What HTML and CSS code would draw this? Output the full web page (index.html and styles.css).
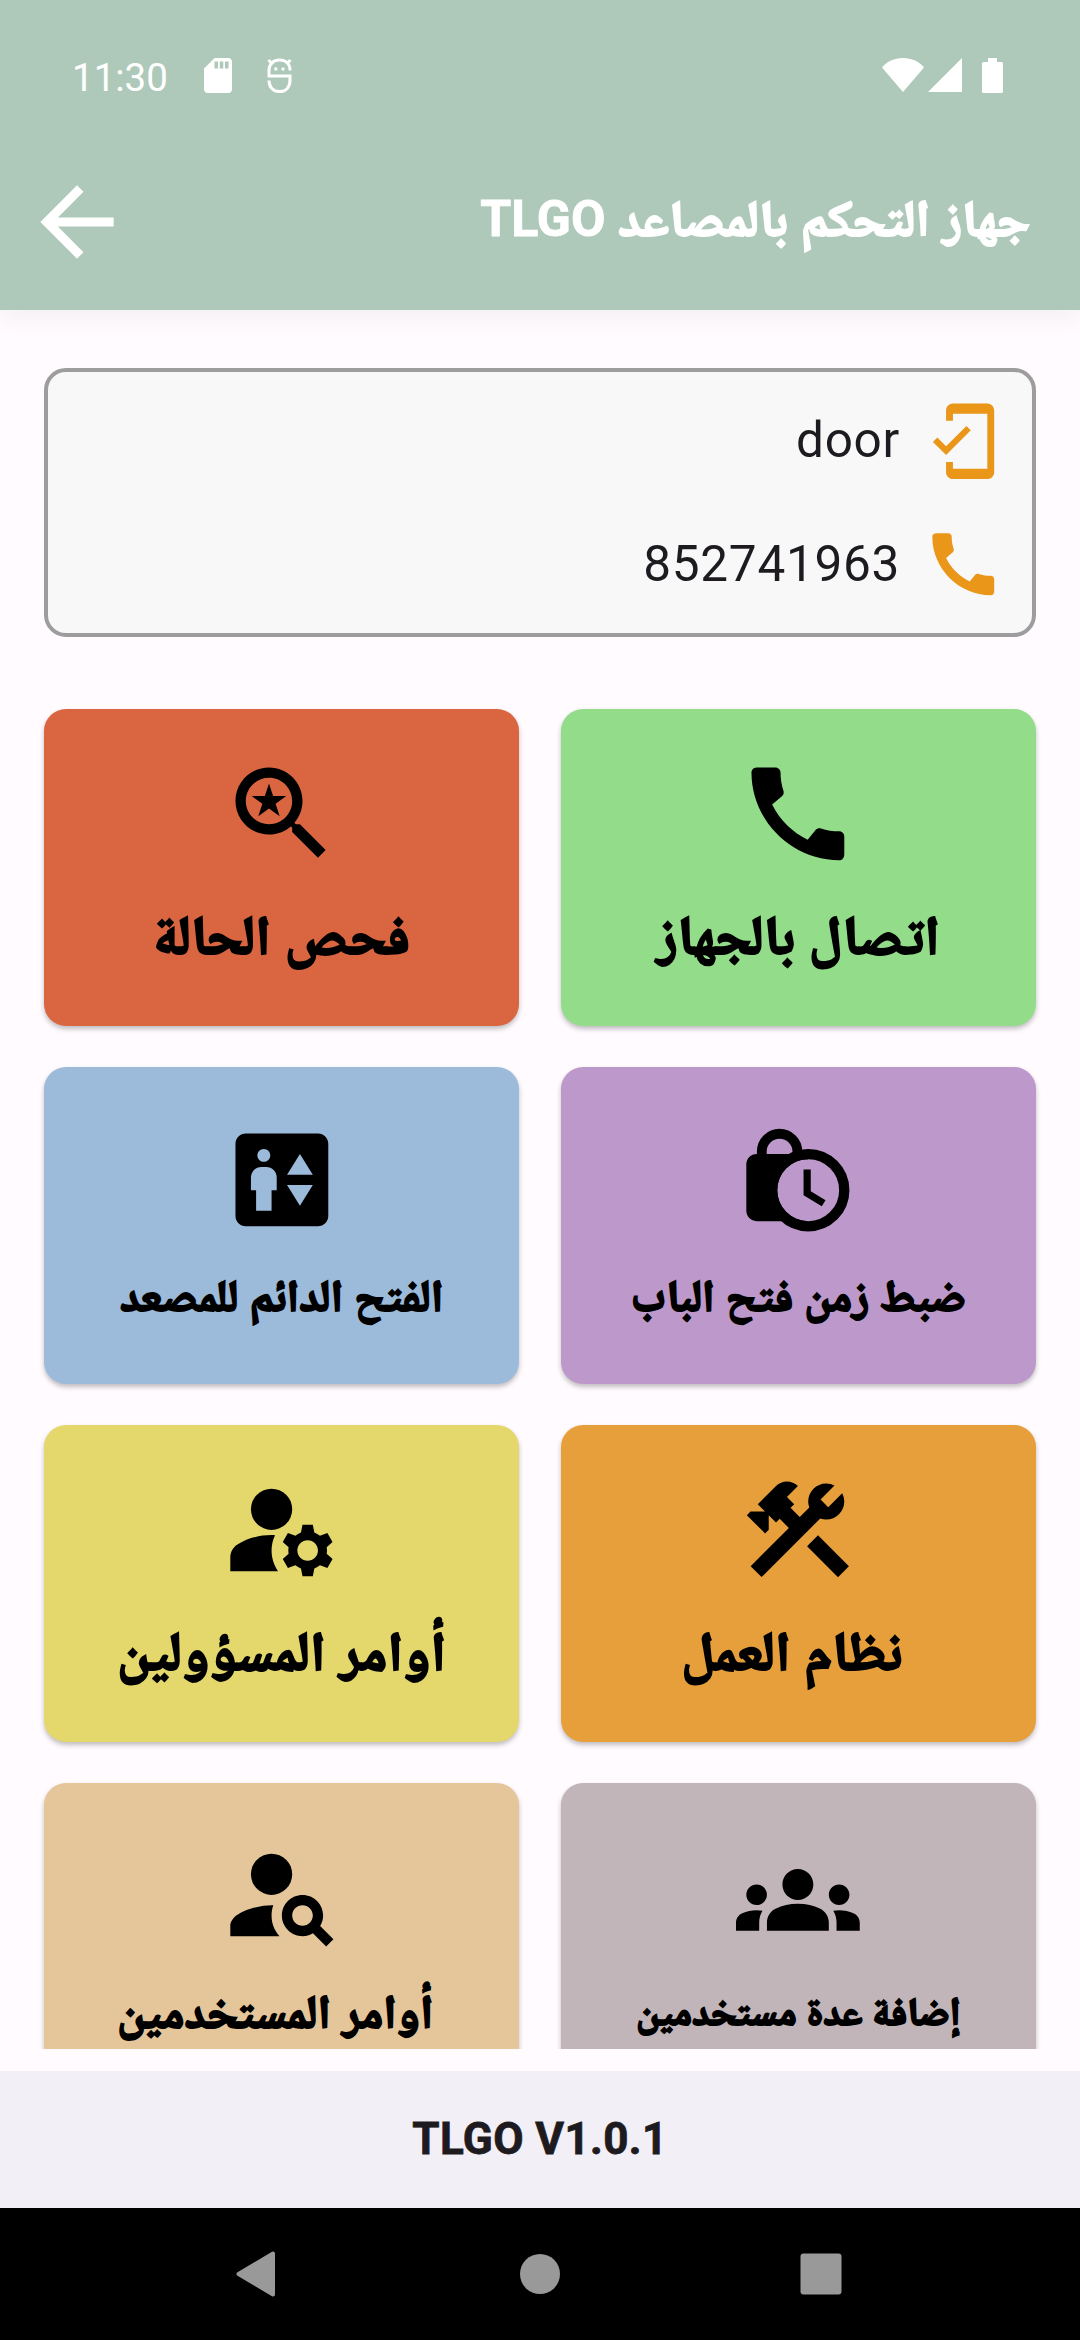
FILE: index.html
```html
<!DOCTYPE html>
<html lang="ar" dir="rtl">
<head>
  <meta charset="UTF-8">
  <title>جهاز التحكم بالمصاعد TLGO</title>
  <link rel="stylesheet" href="styles.css">
</head>
<body>
  <header class="header">
    <div class="status-bar" dir="ltr">
      <span class="time">11:30</span>
      <svg class="sd" viewBox="4 2 16 20"><path d="M18 2h-8L4 8v12c0 1.100.9 2 2 2h12c1.100 0 2-.9 2-2V4c0-1.100-.9-2-2-2zm-6 6h-2V4h2v4zm3 0h-2V4h2v4zm3 0h-2V4h2v4z"/></svg>
      <svg class="bug" viewBox="0 0 25 35">
        <g fill="none" stroke="#fff" stroke-width="3">
          <path d="M23 12.500C23 5.500 18.500 2 12.500 2S2 6 2 12.500V18h21v4c0 7-4 11.500-10.500 11.500S2 29 2 22.500"/>
          <path d="M1.500 2l4 4M23.500 2l-4 4"/>
        </g>
        <circle cx="8.800" cy="11" r="1.700"/><circle cx="16" cy="11" r="1.700"/>
      </svg>
      <span class="spacer"></span>
      <svg class="wifi" viewBox="0 0 42 34"><path d="M21 34L0 9.500C5 3.500 12 0 21 0s16 3.500 21 9.500z"/></svg>
      <svg class="signal" viewBox="0 0 34 34"><path d="M34 0v34H0z"/></svg>
      <svg class="battery" viewBox="0 0 21 35"><path d="M6 0h9v4h4.500Q21 4 21 5.500v28q0 1.500-1.500 1.500h-18Q0 35 0 33.500v-28Q0 4 1.500 4H6z"/></svg>
    </div>
    <div class="app-bar">
      <h1 class="title">جهاز التحكم بالمصاعد <span class="brand">TLGO</span></h1>
      <svg class="back" viewBox="0 0 24 24"><path d="M20 11H7.830l5.590-5.590L12 4l-8 8 8 8 1.410-1.410L7.830 13H20v-2z"/></svg>
    </div>
  </header>

  <main class="content">
    <section class="info">
      <div class="info-row">
        <svg viewBox="0 0 24 24"><path d="M19 1H9c-1.100 0-2 .9-2 2v3h2V4h10v16H9v-2H7v3c0 1.100.9 2 2 2h10c1.100 0 2-.9 2-2V3c0-1.100-.9-2-2-2zM7.010 13.470l-2.550-2.550-1.270 1.270L7 16l7.190-7.190-1.270-1.270z"/></svg>
        <span>door</span>
      </div>
      <div class="info-row">
        <svg viewBox="0 0 24 24"><path d="M20.010 15.380c-1.230 0-2.420-.2-3.530-.56-.35-.12-.74-.03-1.010.24l-1.570 1.970c-2.830-1.350-5.480-3.900-6.890-6.830l1.950-1.660c.27-.28.35-.67.24-1.020-.37-1.110-.56-2.300-.56-3.530 0-.54-.45-.99-.99-.99H4.190C3.650 3 3 3.240 3 3.990 3 13.280 10.730 21 20.010 21c.71 0 .99-.63.99-1.180v-3.450c0-.54-.45-.99-.99-.99z"/></svg>
        <span>852741963</span>
      </div>
    </section>

    <section class="grid">
      <div class="card green">
        <svg viewBox="0 0 24 24"><path d="M20.010 15.380c-1.230 0-2.420-.2-3.530-.56-.35-.12-.74-.03-1.010.24l-1.570 1.970c-2.830-1.350-5.480-3.900-6.890-6.830l1.950-1.660c.27-.28.35-.67.24-1.020-.37-1.110-.56-2.300-.56-3.530 0-.54-.45-.99-.99-.99H4.190C3.650 3 3 3.240 3 3.990 3 13.280 10.730 21 20.010 21c.71 0 .99-.63.99-1.180v-3.450c0-.54-.45-.99-.99-.99z"/></svg>
        <div class="label large">اتصال بالجهاز</div>
      </div>
      <div class="card red">
        <svg viewBox="0 0 24 24"><path d="M15.500 14h-.79l-.28-.27C15.410 12.590 16 11.110 16 9.500 16 5.910 13.090 3 9.500 3S3 5.910 3 9.500 5.910 16 9.500 16c1.610 0 3.090-.59 4.230-1.570l.27.28v.79l5 4.990L20.490 19l-4.990-5zm-6 0C7.010 14 5 11.990 5 9.500S7.010 5 9.500 5 14 7.010 14 9.500 11.990 14 9.500 14z"/><path d="M9.500 6.100l.8 2.450h2.550l-2.060 1.500.78 2.430L9.500 10.980l-2.070 1.500.78-2.430-2.060-1.500H8.700z"/></svg>
        <div class="label large">فحص الحالة</div>
      </div>
      <div class="card purple">
        <svg viewBox="0 0 24 24">
          <path d="M4 7h10v1a6 6 0 0 0 0 12H4c-1.100 0-2-.9-2-2V9c0-1.100.9-2 2-2z"/>
          <path d="M5 7.500v-1a3.450 3.450 0 0 1 6.900 0v1" fill="none" stroke="#000" stroke-width="1.900"/>
          <circle cx="14" cy="14" r="7" fill="none" stroke="#000" stroke-width="2"/>
          <path d="M14.500 10h-1.400v5l3.530 2.130.74-1.200-2.870-1.700z"/>
        </svg>
        <div class="label medium">ضبط زمن فتح الباب</div>
      </div>
      <div class="card blue">
        <svg viewBox="0 0 24 24"><path d="M19 3H5c-1.100 0-2 .9-2 2v14c0 1.100.9 2 2 2h14c1.100 0 2-.9 2-2V5c0-1.100-.9-2-2-2zM8.500 6c.69 0 1.250.56 1.250 1.250S9.190 8.500 8.500 8.500s-1.250-.56-1.250-1.250S7.810 6 8.500 6zM11 14h-1v4H7v-4H6v-2.500c0-1.100.9-2 2-2h1c1.100 0 2 .9 2 2V14zm4.500 3L13 13h5l-2.500 4zM13 11l2.500-4 2.500 4h-5z"/></svg>
        <div class="label medium">الفتح الدائم للمصعد</div>
      </div>
      <div class="card orange">
        <svg viewBox="0 0 24 24">
          <path d="M13.783 15.172l2.121-2.121 5.996 5.996-2.121 2.121zM17.500 10c1.930 0 3.500-1.570 3.500-3.500 0-.58-.16-1.120-.41-1.600l-2.700 2.700-1.490-1.490 2.700-2.700c-.48-.25-1.020-.41-1.600-.41C15.570 3 14 4.570 14 6.500c0 .41.080.8.210 1.160l-1.850 1.850-1.780-1.780.71-.71-1.410-1.410L12 3.490c-1.170-1.170-3.070-1.170-4.240 0L4.220 7.030l1.410 1.410H2.810l-.71.71 3.540 3.540.71-.71V9.150l1.410 1.410.71-.71 1.780 1.780-7.410 7.410 2.120 2.120L16.340 9.790c.36.13.75.21 1.160.21z"/>
        </svg>
        <div class="label large shifted">نظام العمل</div>
      </div>
      <div class="card yellow">
        <svg viewBox="0 0 24 24">
          <circle cx="10" cy="8" r="4"/>
          <path d="M10.670 13.020C10.450 13.010 10.230 13 10 13c-2.420 0-4.680.67-6.610 1.820C2.510 15.340 2 16.320 2 17.350V20h9.260C10.470 18.870 10 17.490 10 16c0-1.070.25-2.070.67-2.980zM20.750 16c0-.22-.03-.42-.06-.63l1.140-1.010-1-1.730-1.450.49c-.32-.27-.68-.48-1.080-.63L18 11h-2l-.3 1.490c-.4.150-.76.36-1.080.63l-1.450-.49-1 1.730 1.140 1.010c-.03.210-.06.410-.06.630s.03.420.06.630l-1.140 1.010 1 1.730 1.450-.49c.32.270.68.480 1.080.63L16 21h2l.3-1.490c.4-.15.760-.36 1.080-.63l1.450.49 1-1.730-1.140-1.010c.03-.21.060-.41.060-.63zM17 18c-1.100 0-2-.9-2-2s.9-2 2-2 2 .9 2 2-.9 2-2 2z"/>
        </svg>
        <div class="label large">أوامر المسؤولين</div>
      </div>
      <div class="card gray">
        <svg viewBox="0 0 24 24"><path d="M12 12.750c1.630 0 3.070.39 4.240.9 1.080.48 1.760 1.560 1.760 2.730V18H6v-1.610c0-1.180.68-2.260 1.760-2.730 1.170-.52 2.610-.91 4.240-.91zM4 13c1.100 0 2-.9 2-2s-.9-2-2-2-2 .9-2 2 .9 2 2 2zm1.130 1.100c-.37-.06-.74-.1-1.130-.1-.99 0-1.930.21-2.780.58C.48 14.900 0 15.620 0 16.430V18h4.500v-1.610c0-.83.23-1.610.63-2.290zM20 13c1.100 0 2-.9 2-2s-.9-2-2-2-2 .9-2 2 .9 2 2 2zm4 3.430c0-.81-.48-1.530-1.220-1.850-.85-.37-1.790-.58-2.780-.58-.39 0-.76.04-1.130.1.4.68.630 1.460.630 2.290V18H24v-1.570zM12 6c1.660 0 3 1.340 3 3s-1.340 3-3 3-3-1.340-3-3 1.340-3 3-3z"/></svg>
        <div class="label small">إضافة عدة مستخدمين</div>
      </div>
      <div class="card tan">
        <svg viewBox="0 0 24 24">
          <circle cx="10" cy="8" r="4"/>
          <path d="M10.350 14.010C7.620 13.910 2 15.270 2 18v2h9.540c-2.470-2.760-1.230-5.890-1.190-5.990zM19.430 18.020c.36-.59.57-1.280.57-2.020 0-2.210-1.790-4-4-4s-4 1.790-4 4 1.790 4 4 4c.74 0 1.430-.22 2.020-.57L20.590 22 22 20.590l-2.570-2.570zM16 18c-1.100 0-2-.9-2-2s.9-2 2-2 2 .9 2 2-.9 2-2 2z"/>
        </svg>
        <div class="label normal shifted">أوامر المستخدمين</div>
      </div>
    </section>
  </main>

  <footer class="footer"><span dir="ltr">TLGO V1.0.1</span></footer>

  <nav class="nav-bar" dir="ltr">
    <svg viewBox="0 0 46 46"><path d="M37 2.500v41L2.500 23z" stroke="#999" stroke-width="4" stroke-linejoin="round"/></svg>
    <svg viewBox="0 0 46 46"><circle cx="23" cy="23" r="20"/></svg>
    <svg viewBox="0 0 46 46"><rect x="2.500" y="2.500" width="41" height="41" rx="3"/></svg>
  </nav>
</body>
</html>
```
FILE: styles.css
```css
* {
  box-sizing: border-box;
}

body {
  margin: 0;
  width: 1080px;
  height: 2340px;
  display: flex;
  flex-direction: column;
  overflow: hidden;
  background: #fffbff;
  color: #1d1b20;
  font-family: Roboto, "Noto Naskh Arabic", "Noto Sans Arabic", "DejaVu Sans", sans-serif;
}

svg {
  display: block;
  flex: none;
}

/* header */

.header {
  flex: none;
  height: 310px;
  background: #aec9b9;
  color: #fff;
  fill: #fff;
  box-shadow: 0 8px 24px rgba(0, 0, 0, 0.05);
}

.status-bar {
  display: flex;
  align-items: center;
  height: 134px;
  padding: 16px 77px 0 72px;
}

.time {
  font-size: 38.5px;
  line-height: 46px;
  padding-top: 6px;
}

.sd {
  width: 28px;
  height: 35px;
  margin-left: 36px;
}

.bug {
  width: 25px;
  height: 35px;
  margin-left: 35px;
}

.spacer {
  flex: 1;
}

.wifi {
  width: 42px;
  height: 34px;
}

.signal {
  width: 34px;
  height: 34px;
  margin-left: 4px;
}

.battery {
  width: 21px;
  height: 35px;
  margin-left: 20px;
}

.app-bar {
  display: flex;
  align-items: center;
  justify-content: space-between;
  height: 176px;
  padding: 0 50px 0 22px;
}

.title {
  margin: 0;
  padding-bottom: 6px;
  font-size: 51px;
  line-height: 58px;
  white-space: nowrap;
  -webkit-text-stroke: 2px #fff;
}

.brand {
  font-size: 50px;
  -webkit-text-stroke-width: 0.8px;
}

.back {
  width: 110px;
  height: 110px;
}

/* device info */

.content {
  flex: 1;
  min-height: 0;
  padding: 58px 44px 0;
  margin-bottom: 22px;
  overflow: hidden;
  clip-path: inset(0);
}

.info {
  display: flex;
  flex-direction: column;
  gap: 41px;
  height: 269px;
  padding: 27.5px;
  border: 4px solid #9e9d9d;
  border-radius: 22px;
  background: #f8f8f8;
}

.info-row {
  display: flex;
  align-items: center;
  gap: 22px;
  height: 82.5px;
  font-size: 49.5px;
  letter-spacing: 0.7px;
}

.info-row svg {
  width: 82.5px;
  height: 82.5px;
  fill: #ea9619;
}

.info-row span {
  padding-bottom: 1px;
}

/* command cards */

.grid {
  display: grid;
  grid-template-columns: 1fr 1fr;
  gap: 41.25px;
  margin-top: 72px;
}

.card {
  display: flex;
  flex-direction: column;
  align-items: center;
  justify-content: center;
  height: 316.9px;
  border-radius: 22px;
  box-shadow: 0 3px 5px rgba(0, 0, 0, 0.25);
  color: #000;
}

.card svg {
  width: 123.75px;
  height: 123.75px;
}

.green { background: #93dd8a; }
.red { background: #d96641; }
.purple { background: #bc99ca; }
.blue { background: #9cbada; }
.orange { background: #e79f3c; }
.yellow { background: #e4d76b; }
.gray { background: #c2b5b9; }
.tan { background: #e5c69a; }

.label {
  font-weight: bold;
  white-space: nowrap;
  -webkit-text-stroke: 2px #000;
}

.large {
  padding-top: 15px;
  font-size: 55.3px;
  line-height: 92px;
}

.normal {
  padding-top: 15px;
  font-size: 47px;
  line-height: 79px;
}

.medium {
  padding-top: 18px;
  font-size: 44.6px;
  line-height: 73px;
}

.small {
  padding-top: 17px;
  font-size: 39.2px;
  line-height: 67px;
}

.shifted {
  padding-right: 13px;
}

/* bottom */

.footer {
  flex: none;
  display: flex;
  align-items: center;
  justify-content: center;
  height: 137px;
  padding-bottom: 2px;
  background: #f3eff7;
  font-size: 44px;
  font-weight: bold;
  letter-spacing: 0.4px;
  -webkit-text-stroke: 0.8px #1d1b20;
}

.nav-bar {
  flex: none;
  display: flex;
  align-items: center;
  justify-content: space-between;
  height: 132px;
  padding: 0 236px;
  background: #000;
  fill: #999;
}

.nav-bar svg {
  width: 46px;
  height: 46px;
}
```
